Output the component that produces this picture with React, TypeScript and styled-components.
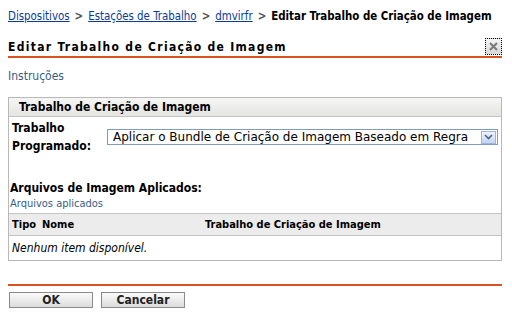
import styled, { createGlobalStyle } from "styled-components";

const GlobalStyle = createGlobalStyle`
  html, body {
    margin: 0;
    padding: 0;
    background: #ffffff;
  }
  body {
    font-family: "DejaVu Sans Condensed", "DejaVu Sans", sans-serif;
    font-size: 11px;
    color: #000000;
  }
`;

const Page = styled.div`
  width: 512px;
  height: 317px;
  padding: 7px 10px 0 8px;
  box-sizing: border-box;
`;

const Breadcrumb = styled.div`
  display: flex;
  align-items: center;
  height: 18px;
  font-size: 11.4px;
  white-space: nowrap;
`;

const Crumb = styled.a`
  color: #0b3a9a;
  text-decoration: underline;
`;

const Sep = styled.span`
  margin: 0 5px;
  color: #555555;
  font-weight: bold;
`;

const Current = styled.span`
  font-weight: bold;
`;

const TitleBar = styled.div`
  display: flex;
  align-items: flex-end;
  justify-content: space-between;
  margin-top: 13px;
  padding-bottom: 1px;
  border-bottom: 2px solid #d9531e;
`;

const Title = styled.h1`
  margin: 0;
  font-size: 12px;
  line-height: 16px;
  font-weight: bold;
  letter-spacing: 1.3px;
`;

const CloseBtn = styled.button`
  width: 17px;
  height: 17px;
  padding: 0;
  border: 1px dotted #000000;
  background: linear-gradient(#f4f4f4, #d8d8d8);
  display: flex;
  align-items: center;
  justify-content: center;
`;

const Instructions = styled.a`
  display: block;
  margin-top: 11px;
  line-height: 14px;
  color: #35607f;
  font-size: 12px;
`;

const Panel = styled.div`
  margin-top: 14px;
  border: 1px solid #b8b8b8;
`;

const PanelHeader = styled.div`
  height: 18px;
  line-height: 18px;
  padding-left: 10px;
  font-size: 12px;
  font-weight: bold;
  background: linear-gradient(#f6f6f4, #e4e4e2);
  border-bottom: 1px solid #c4c4c4;
`;

const FieldRow = styled.div`
  display: grid;
  grid-template-columns: 95px 1fr;
  align-items: center;
  padding: 2px 3px 0 3px;
`;

const Label = styled.label`
  font-size: 12px;
  font-weight: bold;
  line-height: 18px;
`;

const Select = styled.div`
  display: flex;
  align-items: center;
  justify-content: space-between;
  height: 14px;
  border: 1px solid #7f9db9;
  padding-left: 5px;
  font-family: "DejaVu Sans", sans-serif;
  font-size: 12px;
  white-space: nowrap;
`;

const Arrow = styled.span`
  width: 15px;
  height: 13px;
  margin-right: 1px;
  box-sizing: border-box;
  border: 1px solid #9fb6dc;
  background: linear-gradient(#eef3fd, #c3d5f4);
  display: flex;
  align-items: center;
  justify-content: center;
`;

const Section = styled.div`
  margin-top: 26px;
  padding-left: 1px;
`;

const SectionTitle = styled.div`
  font-size: 12px;
  line-height: 14px;
  font-weight: bold;
`;

const SubLink = styled.a`
  display: block;
  color: #35607f;
  font-size: 11px;
  line-height: 14px;
  margin: 2px 0;
`;

const Table = styled.div`
  margin-left: -1px;
  border-top: 1px solid #c4c4c4;
`;

const HeadRow = styled.div`
  display: grid;
  grid-template-columns: 30px 163px 1fr;
  height: 21px;
  align-items: center;
  padding-left: 3px;
  background: #ececec;
  border-bottom: 1px solid #c4c4c4;
  font-weight: bold;
  font-size: 11px;
`;

const EmptyRow = styled.div`
  height: 24px;
  line-height: 24px;
  padding-left: 3px;
  font-style: italic;
  font-size: 12px;
`;

const Footer = styled.div`
  margin-top: 23px;
  border-top: 2px solid #d9531e;
  padding-top: 6px;
  display: flex;
  gap: 7px;
`;

const Button = styled.button`
  width: 84px;
  height: 16px;
  padding: 0;
  margin-left: 1px;
  border: 1px solid #8a8a8a;
  background: linear-gradient(#fafafa, #dcdcdc);
  font-family: inherit;
  font-size: 12px;
  line-height: 14px;
  font-weight: bold;
  color: #222222;
`;

function App() {
  return (
    <>
      <GlobalStyle />
      <Page>
        <Breadcrumb>
          <Crumb>Dispositivos</Crumb>
          <Sep>&gt;</Sep>
          <Crumb>Estações de Trabalho</Crumb>
          <Sep>&gt;</Sep>
          <Crumb>dmvirfr</Crumb>
          <Sep>&gt;</Sep>
          <Current>Editar Trabalho de Criação de Imagem</Current>
        </Breadcrumb>
        <TitleBar>
          <Title>Editar Trabalho de Criação de Imagem</Title>
          <CloseBtn>
            <svg width="11" height="11" viewBox="0 0 11 11">
              <path d="M2 2 L9 9 M9 2 L2 9" stroke="#7a7a7a" strokeWidth="2" />
            </svg>
          </CloseBtn>
        </TitleBar>
        <Instructions>Instruções</Instructions>
        <Panel>
          <PanelHeader>Trabalho de Criação de Imagem</PanelHeader>
          <FieldRow>
            <Label>
              Trabalho
              <br />
              Programado:
            </Label>
            <Select>
              Aplicar o Bundle de Criação de Imagem Baseado em Regra
              <Arrow>
                <svg width="9" height="6" viewBox="0 0 9 6">
                  <path d="M1 1 L4.5 4.5 L8 1" stroke="#4d6185" strokeWidth="1.6" fill="none" />
                </svg>
              </Arrow>
            </Select>
          </FieldRow>
          <Section>
            <SectionTitle>Arquivos de Imagem Aplicados:</SectionTitle>
            <SubLink>Arquivos aplicados</SubLink>
            <Table>
              <HeadRow>
                <span>Tipo</span>
                <span>Nome</span>
                <span>Trabalho de Criação de Imagem</span>
              </HeadRow>
              <EmptyRow>Nenhum item disponível.</EmptyRow>
            </Table>
          </Section>
        </Panel>
        <Footer>
          <Button>OK</Button>
          <Button>Cancelar</Button>
        </Footer>
      </Page>
    </>
  );
}

export default App;
